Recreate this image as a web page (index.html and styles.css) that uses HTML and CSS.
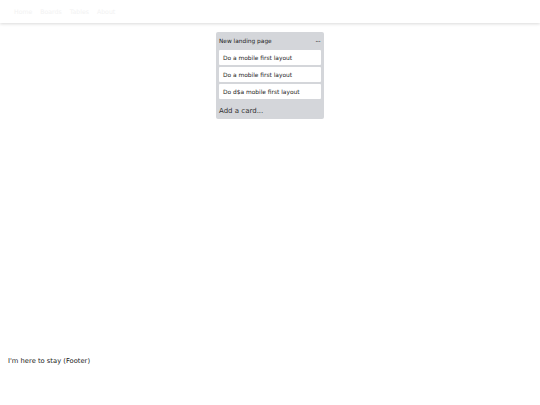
FILE: index.html
```html
<!DOCTYPE html>
<html>
<head>
<meta charset="utf-8">
<link rel="stylesheet" href="styles.css">
</head>
<body>
<nav class="navbar">
  <a class="nav-link" href="#">Home</a>
  <a class="nav-link" href="#">Boards</a>
  <a class="nav-link" href="#">Tables</a>
  <a class="nav-link" href="#">About</a>
</nav>
<main class="board">
  <section class="list">
    <header class="list-header">
      <span class="list-title">New landing page</span>
      <span class="list-menu">···</span>
    </header>
    <div class="cards">
      <div class="card">Do a mobile first layout</div>
      <div class="card">Do a mobile first layout</div>
      <div class="card">Do d$a mobile first layout</div>
    </div>
    <div class="add-card">Add a card...</div>
  </section>
</main>
<footer class="footer">I'm here to stay (Footer)</footer>
</body>
</html>
```
FILE: styles.css
```css
html, body {
  margin: 0;
  padding: 0;
  height: 100%;
}
body {
  font-family: "DejaVu Sans", sans-serif;
  background: #ffffff;
  color: #222;
  display: flex;
  flex-direction: column;
}
.navbar {
  height: 23px;
  display: flex;
  align-items: center;
  gap: 8px;
  padding: 0 14px;
  background: #ffffff;
  box-shadow: 0 1px 3px rgba(0,0,0,0.15);
}
.nav-link {
  color: #f2f2f2;
  text-decoration: none;
  font-size: 6.2px;
}
.board {
  flex: 1;
  display: flex;
  justify-content: center;
  align-items: flex-start;
  padding-top: 9px;
}
.list {
  width: 108px;
  background: #d4d6da;
  border-radius: 2px;
  padding: 0 3px;
  box-sizing: border-box;
}
.list-header {
  height: 18px;
  display: flex;
  align-items: center;
  justify-content: space-between;
  padding: 0 1px 0 0;
}
.list-title {
  font-size: 5.85px;
  color: #222;
}
.list-menu {
  font-size: 7.5px;
  color: #333;
  letter-spacing: -0.8px;
}
.cards {
  display: flex;
  flex-direction: column;
  gap: 2px;
}
.card {
  background: #ffffff;
  border-radius: 1px;
  height: 15px;
  display: flex;
  align-items: center;
  padding: 0 4px;
  font-size: 5.9px;
  color: #222;
}
.add-card {
  margin-top: 4px;
  height: 16px;
  display: flex;
  align-items: center;
  font-size: 7px;
  color: #333;
}
.footer {
  height: 48px;
  padding-left: 8px;
  font-size: 6.75px;
  color: #222;
}
```
